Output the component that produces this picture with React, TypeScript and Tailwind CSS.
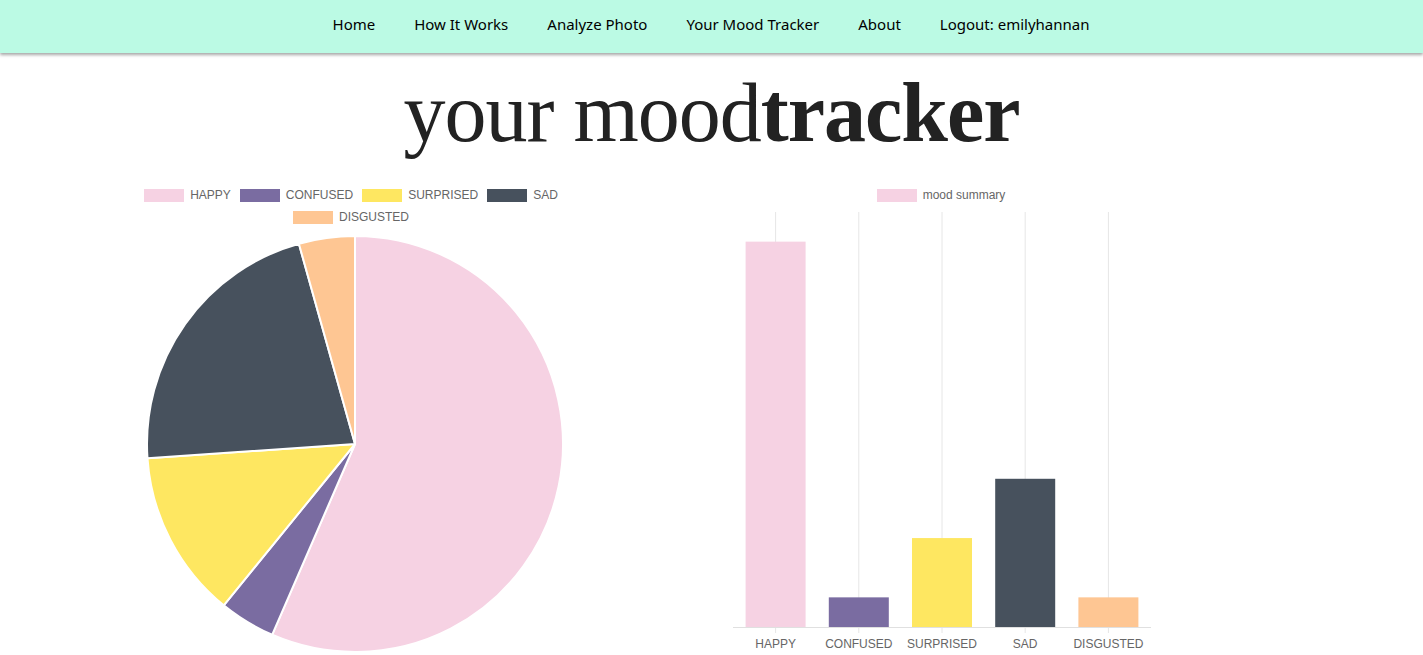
import React from "react";

type Mood = { label: string; value: number; color: string };

const moods: Mood[] = [
  { label: "HAPPY", value: 13, color: "#f6d2e3" },
  { label: "CONFUSED", value: 1, color: "#7a6ca1" },
  { label: "SURPRISED", value: 3, color: "#fee761" },
  { label: "SAD", value: 5, color: "#47515d" },
  { label: "DISGUSTED", value: 1, color: "#fec693" },
];

const navItems = ["Home", "How It Works", "Analyze Photo", "Your Mood Tracker", "About", "Logout: emilyhannan"];

function PieChart() {
  const total = moods.reduce((s, m) => s + m.value, 0);
  const cx = 210;
  const cy = 210;
  const r = 208;
  let start = 0;
  const slices = moods.map((m) => {
    const end = start + (m.value / total) * Math.PI * 2;
    const x1 = cx + r * Math.sin(start);
    const y1 = cy - r * Math.cos(start);
    const x2 = cx + r * Math.sin(end);
    const y2 = cy - r * Math.cos(end);
    const large = end - start > Math.PI ? 1 : 0;
    const d = `M${cx},${cy} L${x1},${y1} A${r},${r} 0 ${large} 1 ${x2},${y2} Z`;
    start = end;
    return { d, color: m.color, label: m.label };
  });
  return (
    <svg width="420" height="420" viewBox="0 0 420 420">
      {slices.map((s) => (
        <path key={s.label} d={s.d} fill={s.color} stroke="#fff" strokeWidth="2" strokeLinejoin="round" />
      ))}
    </svg>
  );
}

function BarChart() {
  const w = 416;
  const h = 415;
  const max = 14;
  const col = w / moods.length;
  return (
    <svg width={w + 2} height={h + 8} viewBox={`0 0 ${w + 2} ${h + 8}`}>
      {moods.map((m, i) => {
        const x = 1 + col * i + col / 2;
        return <line key={m.label} x1={x} x2={x} y1={0} y2={h + 6} stroke="#e6e6e6" strokeWidth="1" />;
      })}
      {moods.map((m, i) => {
        const bh = (m.value / max) * h;
        const x = 1 + col * i + (col - 60) / 2;
        return <rect key={m.label} x={x} y={h - bh} width={60} height={bh} fill={m.color} />;
      })}
      <line x1={0} x2={w + 2} y1={h + 0.5} y2={h + 0.5} stroke="#e0e0e0" strokeWidth="1" />
    </svg>
  );
}

function LegendItem({ color, label }: { color: string; label: string }) {
  return (
    <div className="flex items-center gap-[6px]">
      <span className="block h-[13px] w-[40px]" style={{ backgroundColor: color }} />
      <span>{label}</span>
    </div>
  );
}

export default function App() {
  return (
    <div className="min-h-screen bg-white" style={{ fontFamily: "'Liberation Sans', Arial, sans-serif" }}>
      <nav className="h-[53px] bg-[#bbfae4] shadow-[0_2px_3px_rgba(0,0,0,0.35)] flex items-center justify-center pb-[5px]">
        <ul className="flex items-center gap-[39px] text-[15px] text-black pr-[1px]" style={{ fontFamily: "'Noto Sans', 'Open Sans', sans-serif" }}>
          {navItems.map((n) => (
            <li key={n}>{n}</li>
          ))}
        </ul>
      </nav>

      <h1
        className="mt-[10px] text-center text-[84px] leading-[100px] text-[#222] tracking-[-1px]"
        style={{ fontFamily: "'Liberation Serif', 'Times New Roman', serif" }}
      >
        your mood<span className="font-bold">tracker</span>
      </h1>

      <div className="flex mt-[26px] text-[12px] text-[#666]">
        <div className="w-[708px] flex flex-col items-center">
          <div className="w-[420px] flex flex-wrap justify-center gap-x-[9px] gap-y-[9px] leading-[13px] pr-[6px]">
            {moods.map((m) => (
              <LegendItem key={m.label} color={m.color} label={m.label} />
            ))}
          </div>
          <div className="mt-[10px] ml-[1px]">
            <PieChart />
          </div>
        </div>

        <div className="ml-[25px] w-[418px] flex flex-col items-center">
          <div className="leading-[13px] pr-[2px]">
            <LegendItem color="#f6d2e3" label="mood summary" />
          </div>
          <div className="mt-[10px]">
            <BarChart />
          </div>
          <div className="flex w-[416px] mt-[2px] leading-[14px]">
            {moods.map((m) => (
              <div key={m.label} className="flex-1 text-center">
                {m.label}
              </div>
            ))}
          </div>
        </div>
      </div>
    </div>
  );
}
